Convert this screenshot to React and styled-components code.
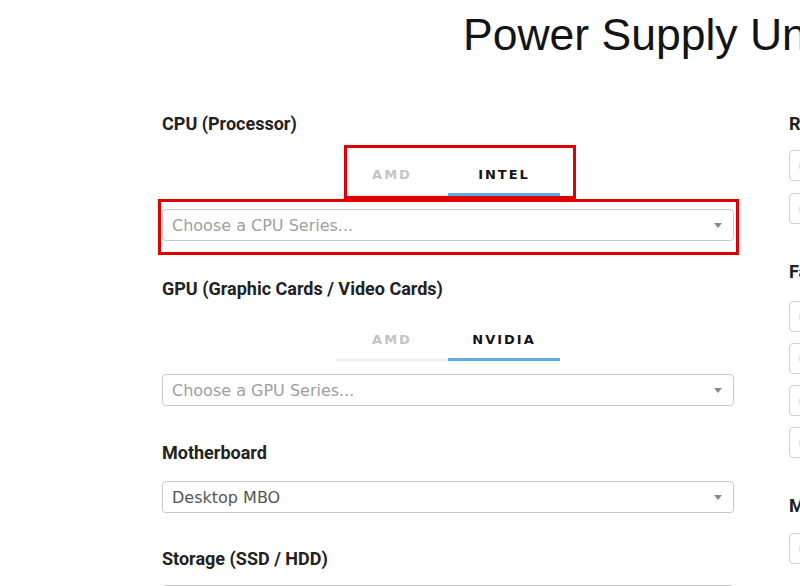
import styled, { createGlobalStyle } from 'styled-components'

const GlobalStyle = createGlobalStyle`
  html, body {
    margin: 0;
    padding: 0;
    background: #fff;
    overflow: hidden;
  }
  body {
    width: 800px;
    height: 586px;
  }
`

const Page = styled.div`
  position: relative;
  width: 800px;
  height: 586px;
  overflow: hidden;
`

const Title = styled.h1`
  margin: 0;
  padding: 9px 0 0 463px;
  height: 105px;
  box-sizing: border-box;
  font-family: 'Liberation Sans', Arial, sans-serif;
  font-weight: 400;
  font-size: 44.5px;
  line-height: 52px;
  color: #141414;
  white-space: nowrap;
`

const Columns = styled.div`
  display: flex;
  gap: 55px;
  padding-left: 162px;
  padding-top: 9px;
`

const LeftColumn = styled.div`
  width: 572px;
  flex-shrink: 0;
`

const RightColumn = styled.div`
  width: 200px;
  flex-shrink: 0;
`

const Section = styled.section`
  margin-bottom: ${(p) => p.$space || 38}px;
`

const Label = styled.div`
  font-family: Roboto, 'Liberation Sans', sans-serif;
  font-weight: 700;
  font-size: 18px;
  line-height: 20px;
  color: #222;
  margin-bottom: ${(p) => p.$space || 18}px;
  white-space: nowrap;
`

const TabList = styled.div`
  display: flex;
  justify-content: center;
  margin: 20px 0 13px;
`

const Tab = styled.div`
  width: 112px;
  padding: 13px 0 13px;
  text-align: center;
  font-family: 'DejaVu Sans', Verdana, sans-serif;
  font-weight: 700;
  font-size: 13px;
  line-height: 16px;
  letter-spacing: 2px;
  color: ${(p) => (p.$active ? '#141414' : '#c4c4c4')};
  box-shadow: inset 0 ${(p) => (p.$active ? '-3px 0 #5aaee0' : '-2px 0 #f0f0f0')};
`

const SelectBox = styled.div`
  position: relative;
  height: 32px;
  box-sizing: border-box;
  border: 1px solid #c9c9c9;
  border-radius: 4px;
  padding: 0 10px 0 9px;
  display: flex;
  align-items: center;
  font-family: 'DejaVu Sans', Verdana, sans-serif;
  font-size: 16px;
  color: ${(p) => (p.$placeholder ? '#a0a0a0' : '#555')};
  background: #fff;
`

const Caret = styled.span`
  margin-left: auto;
  width: 0;
  height: 0;
  border-left: 4px solid transparent;
  border-right: 4px solid transparent;
  border-top: 5px solid #8a8a8a;
  margin-right: 1px;
`

const FieldStack = styled.div`
  display: flex;
  flex-direction: column;
  gap: ${(p) => p.$gap || 12}px;
`

const SmallInput = styled.div`
  height: 31px;
  width: 120px;
  box-sizing: border-box;
  border: 1px solid #cfcfcf;
  border-radius: 4px;
  padding-left: 8px;
  display: flex;
  align-items: center;
  font-family: 'DejaVu Sans', sans-serif;
  font-size: 14px;
  color: #e2e2e2;
`

const Highlight = styled.div`
  position: absolute;
  box-sizing: border-box;
  border: 3px solid #e10000;
  pointer-events: none;
`

function Select({ value, placeholder }) {
  return (
    <SelectBox $placeholder={!value}>
      {value || placeholder}
      <Caret />
    </SelectBox>
  )
}

function Tabs({ items, active }) {
  return (
    <TabList>
      {items.map((item) => (
        <Tab key={item} $active={item === active}>
          {item}
        </Tab>
      ))}
    </TabList>
  )
}

export default function App() {
  return (
    <Page>
      <GlobalStyle />
      <Title>Power Supply Unit Calculator</Title>
      <Columns>
        <LeftColumn>
          <Section>
            <Label $space={0.01}>CPU (Processor)</Label>
            <Tabs items={['AMD', 'INTEL']} active="INTEL" />
            <Select placeholder="Choose a CPU Series..." />
          </Section>
          <Section $space={37}>
            <Label $space={0.01}>GPU (Graphic Cards / Video Cards)</Label>
            <Tabs items={['AMD', 'NVIDIA']} active="NVIDIA" />
            <Select placeholder="Choose a GPU Series..." />
          </Section>
          <Section $space={36}>
            <Label>Motherboard</Label>
            <Select value="Desktop MBO" />
          </Section>
          <Section>
            <Label $space={16}>Storage (SSD / HDD)</Label>
            <Select placeholder="" />
          </Section>
        </LeftColumn>
        <RightColumn>
          <Section>
            <Label $space={16}>RAM (Memory)</Label>
            <FieldStack $gap={12}>
              <SmallInput>0</SmallInput>
              <SmallInput>0</SmallInput>
            </FieldStack>
          </Section>
          <Section>
            <Label $space={19}>Fans</Label>
            <FieldStack $gap={11}>
              <SmallInput>0</SmallInput>
              <SmallInput>0</SmallInput>
              <SmallInput>0</SmallInput>
              <SmallInput>0</SmallInput>
            </FieldStack>
          </Section>
          <Section>
            <Label $space={17}>Monitor</Label>
            <FieldStack>
              <SmallInput>0</SmallInput>
            </FieldStack>
          </Section>
        </RightColumn>
      </Columns>
      <Highlight style={{ left: 344, top: 145, width: 232, height: 54 }} />
      <Highlight style={{ left: 158, top: 199, width: 581, height: 56 }} />
    </Page>
  )
}
